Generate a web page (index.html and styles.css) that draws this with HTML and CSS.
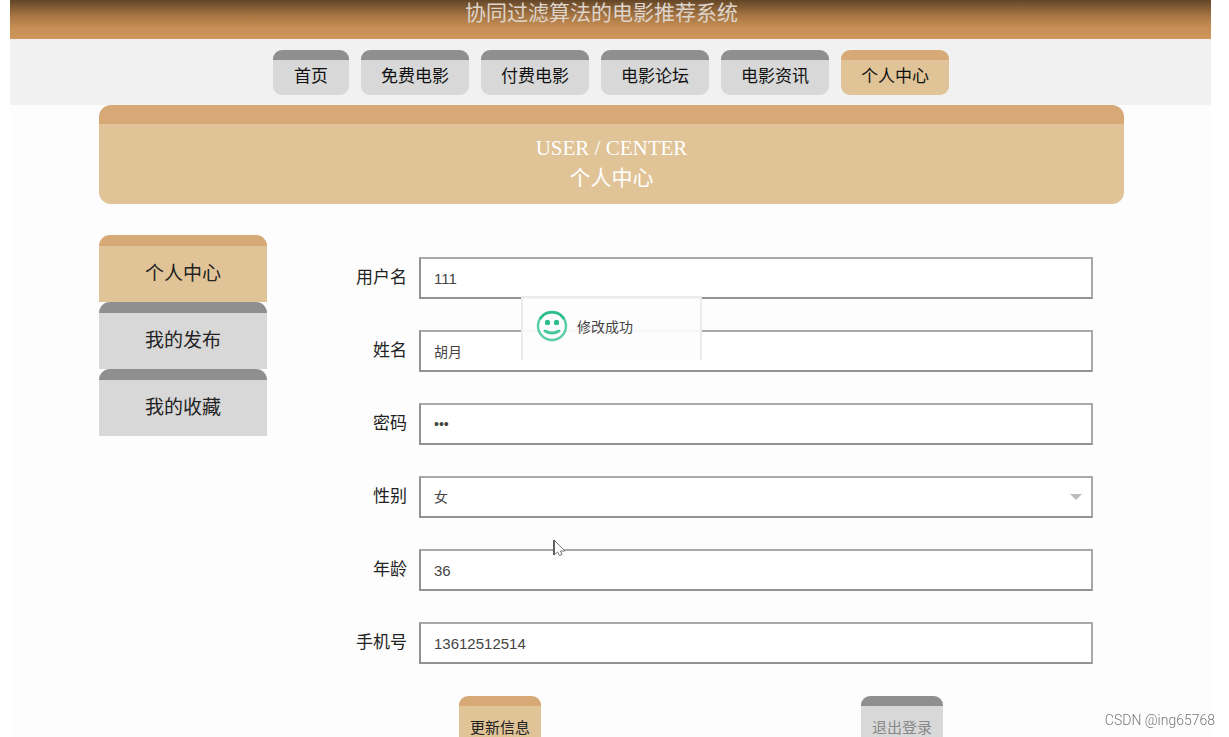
FILE: index.html
```html
<!DOCTYPE html>
<html lang="zh-CN">
<head>
<meta charset="utf-8">
<title>个人中心</title>
<link rel="stylesheet" href="styles.css">
</head>
<body>
<div class="page">
  <header class="header"><h1 class="site-title">协同过滤算法的电影推荐系统</h1></header>
  <nav class="nav">
    <a class="tab" href="#">首页</a>
    <a class="tab" href="#">免费电影</a>
    <a class="tab" href="#">付费电影</a>
    <a class="tab" href="#">电影论坛</a>
    <a class="tab" href="#">电影资讯</a>
    <a class="tab active" href="#">个人中心</a>
  </nav>
  <div class="container">
    <section class="banner">
      <p class="banner-en">USER / CENTER</p>
      <h2 class="banner-zh">个人中心</h2>
    </section>
    <main class="main">
      <aside class="side">
        <a class="side-item active" href="#">个人中心</a>
        <a class="side-item" href="#">我的发布</a>
        <a class="side-item" href="#">我的收藏</a>
      </aside>
      <form class="form">
        <div class="row"><label for="user">用户名</label><input class="field numeric" id="user" type="text" value="111"></div>
        <div class="row"><label for="name">姓名</label><input class="field" id="name" type="text" value="胡月"></div>
        <div class="row"><label for="pass">密码</label><input class="field password" id="pass" type="password" value="111"></div>
        <div class="row"><label for="sex">性别</label><div class="select-wrap"><select class="field" id="sex"><option>女</option><option>男</option></select></div></div>
        <div class="row"><label for="age">年龄</label><input class="field numeric" id="age" type="text" value="36"></div>
        <div class="row"><label for="phone">手机号</label><input class="field numeric" id="phone" type="text" value="13612512514"></div>
        <div class="actions">
          <button class="btn active" type="button">更新信息</button>
          <button class="btn logout" type="button">退出登录</button>
        </div>
      </form>
    </main>
  </div>
</div>
<div class="toast" role="status">
  <svg class="smile" viewBox="0 0 32 32" aria-hidden="true">
    <circle cx="16" cy="16" r="14" fill="none" stroke="#5ccda8" stroke-width="2.500"/>
    <path d="M4 9a14 14 0 0 1 24 0" fill="none" stroke="#2dbd8b" stroke-width="2.500"/>
    <rect x="9" y="10" width="5" height="5" rx="1.500" fill="#2dbd8b"/>
    <rect x="18" y="10" width="5" height="5" rx="1.500" fill="#2dbd8b"/>
    <path d="M9 21q7 4 14 0" fill="none" stroke="#45c79b" stroke-width="3" stroke-linecap="round"/>
  </svg>
  <span>修改成功</span>
</div>
<svg class="cursor" viewBox="0 0 14 18" aria-hidden="true">
  <path d="M2 1v15l3.500-3 2 3.500 2.500-1-1.500-3.500h4.500z" fill="#fff" stroke="#777" stroke-width="1"/>
  <path d="M2 1v15" stroke="#444" stroke-width="1.500"/>
</svg>
<div class="watermark">CSDN @ing65768</div>
</body>
</html>
```
FILE: styles.css
```css
* { box-sizing: border-box; }

body {
  margin: 0;
  height: 100vh;
  overflow: hidden;
  background: #fff;
  color: #222;
  font-family: "Liberation Sans", "Noto Sans CJK SC", sans-serif;
}

a { color: inherit; text-decoration: none; }

.page {
  margin: 0 18px 0 10px;
  background: #fdfdfd;
}

.header {
  height: 39px;
  padding-right: 18px;
  text-align: center;
  background: linear-gradient(#634628, #a97744 42%, #c78f55 72%, #d0965b);
}

.site-title {
  margin: 0;
  font-size: 21px;
  font-weight: 400;
  line-height: 26px;
  color: #ddd5cb;
}

.nav {
  display: flex;
  justify-content: center;
  gap: 12px;
  padding: 11px 0 10px 1px;
  background: #f1f1f1;
}

.tab {
  min-width: 76px;
  height: 45px;
  padding: 0 20px;
  border-top: 10px solid #8f8f8f;
  border-radius: 9px;
  background: #d8d8d8;
  font-size: 17px;
  line-height: 34px;
  text-align: center;
  color: #111;
}

.tab.active,
.side-item.active,
.btn.active {
  border-top-color: #d7a976;
  background: #e0c497;
}

.container { padding: 0 87px 0 89px; }

.banner {
  padding: 10px 0 12px;
  border-top: 19px solid #d7a976;
  border-radius: 12px;
  background: #e0c497;
  text-align: center;
  color: #fff;
}

.banner-en {
  margin: 0;
  font-family: "Liberation Serif", serif;
  font-size: 21px;
  line-height: 29px;
}

.banner-zh {
  margin: 0;
  font-size: 21px;
  font-weight: 400;
  line-height: 29px;
}

.main {
  display: flex;
  gap: 32px;
  padding-top: 31px;
}

.side {
  flex: 0 0 168px;
}

.side-item {
  display: block;
  height: 67px;
  border-top: 11px solid #8f8f8f;
  border-radius: 11px 11px 0 0;
  background: #d8d8d8;
  font-size: 19px;
  line-height: 55px;
  text-align: center;
}

.form {
  flex: 1;
  padding-top: 22px;
}

.row {
  display: flex;
  align-items: center;
  gap: 12px;
  margin-bottom: 31px;
  padding-right: 31px;
}

.row label {
  flex: 0 0 108px;
  text-align: right;
  font-size: 17px;
  line-height: 24px;
}

.field {
  flex: 1;
  width: 100%;
  height: 42px;
  padding: 0 13px;
  border: 2px solid #a9a9a9;
  border-bottom-color: #929292;
  border-left-color: #929292;
  border-radius: 0;
  background: #fff;
  color: #444;
  font-family: inherit;
  font-size: 14px;
  appearance: none;
}

.field.numeric { font-size: 15px; }

.field.password { font-size: 14px; }

.select-wrap {
  position: relative;
  flex: 1;
}

.select-wrap .field { display: block; }

.select-wrap::after {
  content: "";
  position: absolute;
  top: 18px;
  right: 11px;
  border: 6px solid transparent;
  border-top-color: #bbb;
  border-bottom: 0;
}

.actions {
  display: grid;
  grid-template-columns: 1fr 1fr;
  justify-items: center;
  padding: 1px 21px 0 0;
}

.btn {
  height: 50px;
  padding: 0 11px;
  border: 0;
  border-top: 10px solid #8f8f8f;
  border-radius: 9px;
  background: #d8d8d8;
  color: #222;
  font-family: inherit;
  font-size: 15px;
}

.btn.logout { color: #888; }

.toast {
  position: absolute;
  top: 296px;
  left: 521px;
  display: flex;
  align-items: center;
  gap: 9px;
  width: 181px;
  height: 64px;
  padding: 0 13px 6px;
  border: 2px solid #ebebeb;
  border-bottom: 0;
  background: rgba(253, 253, 253, 0.93);
  color: #444;
  font-size: 14px;
}

.smile {
  width: 32px;
  height: 32px;
}

.cursor {
  position: absolute;
  top: 539px;
  left: 552px;
  width: 14px;
  height: 18px;
}

.watermark {
  position: fixed;
  right: 14px;
  bottom: 7px;
  color: #777;
  font-family: Roboto, sans-serif;
  font-size: 14px;
  font-weight: 300;
  line-height: 20px;
}
```
